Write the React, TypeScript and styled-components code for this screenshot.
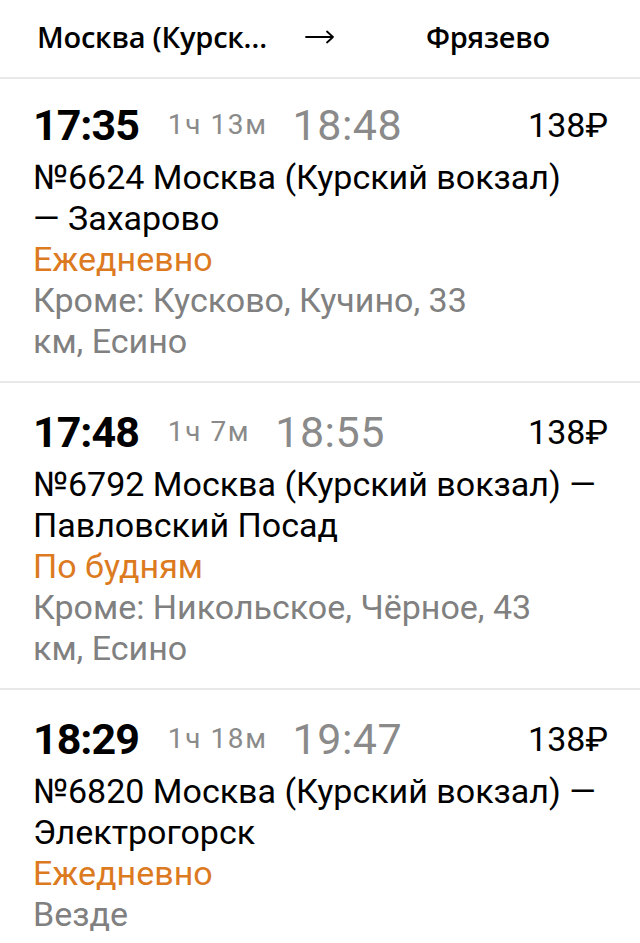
import React from "react";
import styled, { createGlobalStyle } from "styled-components";

const Global = createGlobalStyle`
  html, body { margin: 0; padding: 0; background: #fff; }
  body { font-family: Roboto, "Liberation Sans", sans-serif; -webkit-font-smoothing: antialiased; }
  * { box-sizing: border-box; }
`;

const Page = styled.div`
  width: 640px;
  min-height: 943px;
  background: #fff;
  overflow: hidden;
`;

const Header = styled.header`
  height: 77px;
  display: grid;
  grid-template-columns: 1fr 32px 1fr;
  align-items: center;
  font-family: "Open Sans", "Noto Sans", sans-serif;
  font-weight: 600;
  font-size: 29px;
  color: #000;
  padding-bottom: 4px;
`;

const Station = styled.div`
  text-align: center;
  white-space: nowrap;
  overflow: hidden;
  letter-spacing: -0.2px;
`;

const Arrow = styled.div`
  display: flex;
  justify-content: center;
  align-items: center;
`;

const Card = styled.section<{ $first?: boolean }>`
  border-top: 2px solid #e8e8e8;
  padding: ${(p) => (p.$first ? "20px" : "23px")} 32px 19px 33px;
`;

const TimeRow = styled.div`
  display: flex;
  align-items: center;
  height: 52px;
  line-height: 52px;
`;

const Depart = styled.span`
  font-size: 43px;
  font-weight: 700;
  color: #000;
  letter-spacing: -1px;
`;

const Duration = styled.span`
  font-size: 28px;
  color: #8a8a8a;
  letter-spacing: 1.6px;
  margin: 0 25px 0 29px;
`;

const Arrive = styled.span`
  font-size: 43px;
  font-weight: 400;
  color: #8a8a8a;
  letter-spacing: 0.5px;
`;

const Price = styled.span`
  margin-left: auto;
  font-size: 34px;
  color: #000;
`;

const Lines = styled.div`
  margin-top: 6px;
  font-size: 34px;
  line-height: 41px;
`;

const Route = styled.div`
  color: #000;
`;

const Schedule = styled.div`
  color: #dc7a1f;
`;

const Except = styled.div`
  color: #808080;
`;

type Trip = {
  dep: string;
  dur: string;
  arr: string;
  price: string;
  route: React.ReactNode;
  schedule: string;
  except: React.ReactNode;
};

const trips: Trip[] = [
  {
    dep: "17:35",
    dur: "1ч 13м",
    arr: "18:48",
    price: "138₽",
    route: "№6624 Москва (Курский вокзал) —\u00a0Захарово",
    schedule: "Ежедневно",
    except: (
      <>
        Кроме: Кусково, Кучино, 33
        <br />
        км, Есино
      </>
    ),
  },
  {
    dep: "17:48",
    dur: "1ч 7м",
    arr: "18:55",
    price: "138₽",
    route: "№6792 Москва (Курский вокзал) — Павловский Посад",
    schedule: "По будням",
    except: (
      <>
        Кроме: Никольское, Чёрное, 43
        <br />
        км, Есино
      </>
    ),
  },
  {
    dep: "18:29",
    dur: "1ч 18м",
    arr: "19:47",
    price: "138₽",
    route: "№6820 Москва (Курский вокзал) — Электрогорск",
    schedule: "Ежедневно",
    except: "Везде",
  },
];

export default function App() {
  return (
    <Page>
      <Global />
      <Header>
        <Station>Москва (Курск…</Station>
        <Arrow>
          <svg width="30" height="14" viewBox="0 0 30 14" fill="none" stroke="#000" strokeWidth="1.8" strokeLinecap="round" strokeLinejoin="round">
            <path d="M1 7h27M22 1.5l6 5.5-6 5.5" />
          </svg>
        </Arrow>
        <Station>Фрязево</Station>
      </Header>
      {trips.map((t, i) => (
        <Card key={t.dep} $first={i === 0}>
          <TimeRow>
            <Depart>{t.dep}</Depart>
            <Duration>{t.dur}</Duration>
            <Arrive>{t.arr}</Arrive>
            <Price>{t.price}</Price>
          </TimeRow>
          <Lines>
            <Route>{t.route}</Route>
            <Schedule>{t.schedule}</Schedule>
            <Except>{t.except}</Except>
          </Lines>
        </Card>
      ))}
    </Page>
  );
}
